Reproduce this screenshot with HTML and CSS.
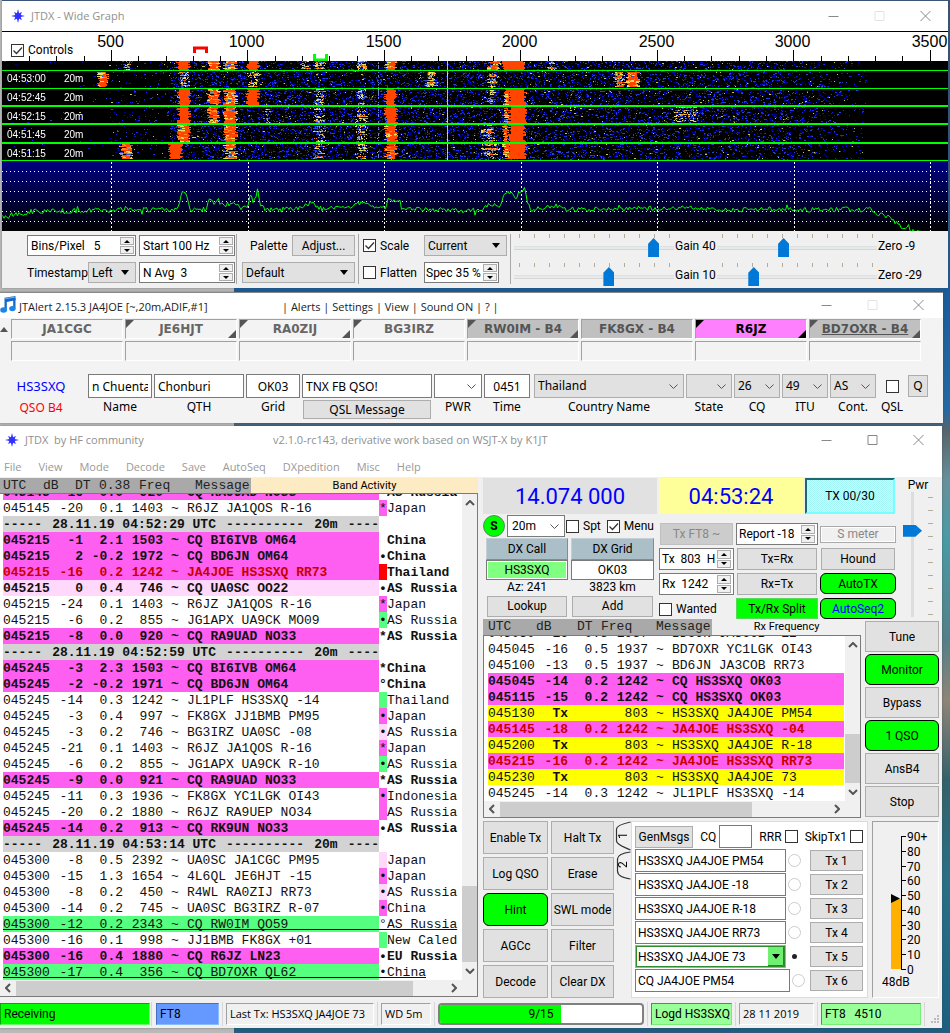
FILE: index.html
```html
<!DOCTYPE html>
<html lang="en">
<head>
<meta charset="utf-8">
<title>JTDX</title>
<link rel="stylesheet" href="styles.css">
</head>
<body>
<svg class="defs" aria-hidden="true">
  <symbol id="star" viewBox="0 0 14 14"><path d="M7 0l1.100 4.300L10.900 3.100 9.700 5.900 14 7l-4.300 1.100 1.200 2.800-2.800-1.200L7 14l-1.100-4.300-2.800 1.200 1.200-2.800L0 7l4.300-1.100-1.200-2.800 2.800 1.200z" fill="#3030ff"/></symbol>
  <symbol id="min" viewBox="0 0 10 10"><path d="M0 5.500h10" stroke="currentColor"/></symbol>
  <symbol id="max" viewBox="0 0 10 10"><path d="M.5.5h9v9h-9z" fill="none" stroke="currentColor"/></symbol>
  <symbol id="close" viewBox="0 0 10 10"><path d="M0 0l10 10M10 0L0 10" stroke="currentColor"/></symbol>
  <symbol id="chev" viewBox="0 0 10 6"><path d="M1 5l4-4 4 4" fill="none" stroke="#555" stroke-width="2"/></symbol>
</svg>

<section class="win graph">
  <header class="title">
    <svg class="logo"><use href="#star"/></svg><span>JTDX - Wide Graph</span>
    <div class="sys"><button aria-label="Minimize"><svg><use href="#min"/></svg></button><button aria-label="Maximize" class="off"><svg><use href="#max"/></svg></button><button aria-label="Close"><svg><use href="#close"/></svg></button></div>
  </header>
  <div class="ruler">
    <svg id="ruler" width="100%" height="30"></svg>
    <label class="check"><input type="checkbox" checked>Controls</label>
  </div>
  <div class="fall">
    <canvas id="fall"></canvas>
    <ul class="stamps">
      <li><b>04:53:00</b>20m</li><li><b>04:52:45</b>20m</li><li><b>04:52:15</b>20m</li><li><b>04:51:45</b>20m</li><li><b>04:51:15</b>20m</li>
    </ul>
  </div>
  <div class="controls">
    <div class="cgroup bins">
      <div class="line">
        <span class="spin w-bins"><input aria-label="Bins per pixel" value="Bins/Pixel   5"><i><button class="u" aria-label="Up"></button><button class="d" aria-label="Down"></button></i></span>
        <span class="spin w-start"><input aria-label="Start" value="Start 100 Hz"><i><button class="u" aria-label="Up"></button><button class="d" aria-label="Down"></button></i></span>
      </div>
      <div class="line">
        <label class="stamp-label">Timestamp<select class="w-left"><option>Left</option></select></label>
        <span class="spin w-start"><input aria-label="N Avg" value="N Avg  3"><i><button class="u" aria-label="Up"></button><button class="d" aria-label="Down"></button></i></span>
      </div>
    </div>
    <div class="cgroup palette">
      <div class="line end"><label for="pal">Palette</label><button class="btn w-adjust">Adjust...</button></div>
      <div class="line"><select id="pal" class="fill"><option>Default</option></select></div>
    </div>
    <div class="cgroup scale">
      <div class="line"><label class="check"><input type="checkbox" checked>Scale</label><select class="w-cur" aria-label="Spectrum"><option>Current</option></select></div>
      <div class="line"><label class="check"><input type="checkbox">Flatten</label><span class="spin w-spec"><input aria-label="Spec" value="Spec 35 %"><i><button class="u" aria-label="Up"></button><button class="d" aria-label="Down"></button></i></span></div>
    </div>
    <div class="cgroup sliders">
      <input id="g1" type="range" value="90"><label for="g1">Gain 40</label><input id="z1" type="range" value="41"><label for="z1">Zero -9</label>
      <input id="g2" type="range" value="60"><label for="g2">Gain 10</label><input id="z2" type="range" value="21"><label for="z2">Zero -29</label>
    </div>
  </div>
</section>

<section class="win alert">
  <header class="title">
    <svg class="note" viewBox="0 0 16 17"><path d="M4.500 1.800L15.500 0v4.300L6.800 6v8H4.500z" fill="#1668c4"/><path d="M13.200 2h2.300v10.500h-2.300z" fill="#1668c4"/><ellipse cx="3.600" cy="14" rx="3.400" ry="2.700" fill="#1c84e8"/><ellipse cx="12.400" cy="12.600" rx="3.200" ry="2.600" fill="#1c84e8"/><path d="M5.200 2.700l9.600-1.500" stroke="#6ab8f8"/></svg>
    <span class="name">JTAlert 2.15.3 JA4JOE [~,20m,ADIF,#1]</span>
    <nav>| <a href="#alerts">Alerts</a> | <a href="#settings">Settings</a> | <a href="#view">View</a> | <a href="#sound">Sound ON</a> | <a href="#help">?</a> |</nav>
    <div class="sys"><button aria-label="Minimize"><svg><use href="#min"/></svg></button><button aria-label="Maximize" class="off"><svg><use href="#max"/></svg></button><button aria-label="Close"><svg><use href="#close"/></svg></button></div>
  </header>
  <div class="calls">
    <span class="uparrow"></span>
    <div>JA1CGC</div><div class="tl br">JE6HJT</div><div class="tl br">RA0ZIJ</div><div class="tl">BG3IRZ</div><div class="tl br b4">RW0IM - B4</div><div class="b4">FK8GX - B4</div><div class="tl br new">R6JZ</div><div class="tl br b4"><u>BD7OXR - B4</u></div>
    <span></span><div></div><div></div><div></div><div></div><div></div><div></div><div></div><div></div>
  </div>
  <div class="qso">
    <div class="who"><b>HS3SXQ</b><em>QSO B4</em></div>
    <label class="f64"><input class="rt" value="n Chuenta">Name</label>
    <label class="f90"><input value="Chonburi">QTH</label>
    <label class="f54"><input class="ct" value="OK03">Grid</label>
    <div class="f130"><input aria-label="QSL message" value="TNX FB QSO!"><button class="btn">QSL Message</button></div>
    <label class="f48"><select class="white"><option></option></select>PWR</label>
    <label class="f46 time"><input class="ct" value="0451">Time</label>
    <label class="f150"><select><option>Thailand</option></select>Country Name</label>
    <label class="f46"><select><option></option></select>State</label>
    <label class="f46"><select><option>26</option></select>CQ</label>
    <label class="f46"><select><option>49</option></select>ITU</label>
    <label class="f46"><select><option>AS</option></select>Cont.</label>
    <label class="qsl"><input type="checkbox">QSL</label>
    <button class="btn q">Q</button>
  </div>
</section>

<section class="win main">
  <header class="title">
    <svg class="logo"><use href="#star"/></svg><span class="name">JTDX &nbsp;by HF community</span><span>v2.1.0-rc143, derivative work based on WSJT-X by K1JT</span>
    <div class="sys"><button aria-label="Minimize"><svg><use href="#min"/></svg></button><button aria-label="Maximize"><svg><use href="#max"/></svg></button><button aria-label="Close"><svg><use href="#close"/></svg></button></div>
  </header>
  <nav class="menu"><a href="#file">File</a><a href="#view">View</a><a href="#mode">Mode</a><a href="#decode">Decode</a><a href="#save">Save</a><a href="#autoseq">AutoSeq</a><a href="#dx">DXpedition</a><a href="#misc">Misc</a><a href="#help">Help</a></nav>
  <div class="work">
    <div class="band">
      <div class="bhead"><div class="cols"><span>UTC</span><span>dB</span><span>DT</span><span>0.38</span><span>Freq</span><span>Message</span></div><h2>Band Activity</h2></div>
      <div class="log">
        <div class="rows"><table id="band"></table></div>
        <div class="vbar"><svg><use href="#chev"/></svg><i></i><b></b><svg class="dn"><use href="#chev"/></svg></div>
        <div class="hbar"><svg class="lf"><use href="#chev"/></svg><b></b><i></i><svg class="rg"><use href="#chev"/></svg></div>
      </div>
    </div>
    <div class="rig">
      <div class="top">
        <div class="knobs">
          <div class="readouts"><div class="freq">14.074 000</div><div class="clock">04:53:24</div><button class="txp">TX 00/30</button></div>
          <div class="tune">
            <div class="dx">
              <div class="bandrow"><button class="sbtn">S</button><select class="white" aria-label="Band"><option>20m</option></select><label class="check"><input type="checkbox">Spt</label><label class="check"><input type="checkbox" checked>Menu</label></div>
              <div class="dxgrid">
                <label for="dxc">DX Call</label><label for="dxg">DX Grid</label>
                <input id="dxc" class="hit" value="HS3SXQ"><input id="dxg" value="OK03">
                <span>Az: 241</span><span>3823 km</span>
                <button class="btn">Lookup</button><button class="btn">Add</button>
              </div>
            </div>
            <div class="ops">
              <button class="btn" disabled>Tx FT8 ~</button>
              <span class="spin"><input aria-label="Report" value="Report -18"><i><button class="u" aria-label="Up"></button><button class="d" aria-label="Down"></button></i></span>
              <div class="smeter">S meter</div>
              <span class="spin"><input aria-label="Tx frequency" value="Tx  803  H"><i><button class="u" aria-label="Up"></button><button class="d" aria-label="Down"></button></i></span>
              <button class="btn">Tx=Rx</button><button class="btn">Hound</button>
              <span class="spin"><input aria-label="Rx frequency" value="Rx  1242"><i><button class="u" aria-label="Up"></button><button class="d" aria-label="Down"></button></i></span>
              <button class="btn">Rx=Tx</button><button class="btn on">AutoTX</button>
              <label class="check"><input type="checkbox">Wanted</label>
              <button class="btn split">Tx/Rx Split</button><button class="btn on blue">AutoSeq2</button>
            </div>
          </div>
        </div>
        <div class="pwr"><label for="pwr">Pwr</label><input id="pwr" type="range" value="71"></div>
      </div>
      <div class="mid">
        <div class="rx">
          <div class="rhead"><div class="cols"><span>UTC</span><span>dB</span><span>DT</span><span>Freq</span><span>Message</span></div><h2>Rx Frequency</h2></div>
          <div class="log">
            <div class="rows"><table id="rx"></table></div>
            <div class="vbar"><svg><use href="#chev"/></svg><i></i><b></b><svg class="dn"><use href="#chev"/></svg></div>
            <div class="hbar"><svg class="lf"><use href="#chev"/></svg><b></b><i></i><svg class="rg"><use href="#chev"/></svg></div>
          </div>
        </div>
        <div class="side"><button class="btn">Tune</button><button class="btn on">Monitor</button><button class="btn">Bypass</button><button class="btn on">1 QSO</button><button class="btn">AnsB4</button><button class="btn">Stop</button></div>
      </div>
      <div class="bottom">
        <div class="pad"><button class="btn">Enable Tx</button><button class="btn">Halt Tx</button><button class="btn">Log QSO</button><button class="btn">Erase</button><button class="btn on">Hint</button><button class="btn">SWL mode</button><button class="btn">AGCc</button><button class="btn">Filter</button><button class="btn">Decode</button><button class="btn">Clear DX</button></div>
        <div class="tabs">
          <svg viewBox="0 0 15 60"><path d="M15 1C6 3 1 5 1 8v12c0 4 8 6 14 9M15 31C7 32 2 34 2 38v12c0 5 6 7 13 8" fill="none" stroke="#333" stroke-width="1.200"/></svg>
          <button>1</button><button>2</button>
        </div>
        <div class="msgs">
          <div class="gen"><button class="btn">GenMsgs</button><label>CQ<input></label><label class="check">RRR<input type="checkbox"></label><label class="check">SkipTx1<input type="checkbox"></label></div>
          <div class="m"><input aria-label="Message 1" value="HS3SXQ JA4JOE PM54"><input type="radio" name="m" aria-label="Tx 1 next"><button class="btn">Tx 1</button></div>
          <div class="m"><input aria-label="Message 2" value="HS3SXQ JA4JOE -18"><input type="radio" name="m" aria-label="Tx 2 next"><button class="btn">Tx 2</button></div>
          <div class="m"><input aria-label="Message 3" value="HS3SXQ JA4JOE R-18"><input type="radio" name="m" aria-label="Tx 3 next"><button class="btn">Tx 3</button></div>
          <div class="m"><input aria-label="Message 4" value="HS3SXQ JA4JOE RR73"><input type="radio" name="m" aria-label="Tx 4 next"><button class="btn">Tx 4</button></div>
          <div class="m"><select aria-label="Message 5"><option>HS3SXQ JA4JOE 73</option></select><input type="radio" name="m" aria-label="Tx 5 next" checked><button class="btn">Tx 5</button></div>
          <div class="m last"><input aria-label="Message 6" value="CQ JA4JOE PM54"><input type="radio" name="m" aria-label="Tx 6 next"><button class="btn">Tx 6</button></div>
        </div>
        <div class="meter">
          <svg width="60" height="174"><path d="M18 77h10v70H18z" fill="#ffb000"/><path d="M18 72l9 4.500-9 4.500z"/><path id="axis" fill="none" stroke="#000"/><g id="marks"></g><text x="9" y="164">48dB</text></svg>
        </div>
      </div>
    </div>
  </div>
  <footer class="status">
    <div class="s-rx">Receiving</div><hr><div class="s-mode">FT8</div><hr><div class="s-last">Last Tx: HS3SXQ JA4JOE 73</div><hr><div class="s-wd">WD 5m</div><hr>
    <div class="s-prog"><i style="width:60%"></i><span>9/15</span></div><hr><div class="s-logd">Logd HS3SXQ</div><hr><div class="s-date">28 11 2019</div><hr><div class="s-cnt">FT8 &nbsp; 4510</div><hr>
    <svg class="grip" viewBox="0 0 9 9"><path d="M6 0h2v2H6zM3 3h2v2H3zM6 3h2v2H6zM0 6h2v2H0zM3 6h2v2H3zM6 6h2v2H6z" fill="#bbb"/></svg>
  </footer>
</section>
<script src="app.js"></script>
</body>
</html>
```
FILE: styles.css
```css
*{box-sizing:border-box}
body{
  margin:0;font:12px/14px Roboto,"Liberation Sans",sans-serif;color:#000;
  background:
    linear-gradient(90deg,#b9b9b9 234px,transparent 234px),
    linear-gradient(#3a5578 0,#1a5c9a 290px,#2469a3 410px,#56646c 430px,#68909a 480px,#4a9aa5 540px,#557f88 640px,#8f8578 700px,#35616a 780px,#2a6f86 880px,#1c5f80 1033px);
}
button,input,select{font:inherit;color:inherit;margin:0;border-radius:0;outline:0}
input[type=checkbox]{appearance:none;width:13px;height:13px;flex:none;background:#fff center/11px no-repeat;border:1px solid #333}
input[type=checkbox]:checked{background-image:url("data:image/svg+xml,%3Csvg xmlns='http://www.w3.org/2000/svg' viewBox='0 0 11 11'%3E%3Cpath d='M1.500 5.500l3 3 5.500-6' fill='none' stroke='%23333' stroke-width='1.300'/%3E%3C/svg%3E")}
a{color:inherit;text-decoration:none}
.defs{position:absolute;width:0;height:0}
.win{background:#f0f0f0;box-shadow:0 0 2px #4448}
.title{display:flex;align-items:center;background:#fff;color:#909090;font:11px/16px "Open Sans","Noto Sans",sans-serif}
.logo{width:14px;height:14px;flex:none}
.sys{margin-left:auto;display:flex;align-items:center;gap:35px;color:#888}
.sys button{border:0;background:none;padding:0;width:11px;height:10px;display:flex}
.sys svg{width:11px;height:10px}
.sys .off{color:#e4e4e4}
.btn{background:#e1e1e1;border:1px solid #adadad;padding:0;text-align:center;white-space:nowrap}
.btn:disabled{background:#ccc;color:#888;border-color:#bfbfbf}
.btn.on{background:#0f0;border:1px solid #000;border-radius:6px}
.btn.blue{color:#00f}
.check{display:flex;align-items:center;gap:4px;white-space:nowrap}
.spin{display:flex;height:21px;background:#fff;border:1px solid #7a7a7a;padding:1px}
.spin input{flex:1;min-width:0;border:0;padding:0 0 0 2px;background:none;white-space:pre}
.spin i{display:flex;flex-direction:column;gap:1px;width:14px;flex:none}
.spin button{flex:1;border:1px solid #adadad;background:#f0f0f0;padding:0;display:flex;align-items:center;justify-content:center}
.spin button::before{content:"";border:3px solid transparent}
.spin .u::before{border-top:0;border-bottom:3px solid #000}
.spin .d::before{border-bottom:0;border-top:3px solid #000}
select{appearance:none;height:21px;border:1px solid #adadad;padding:0 0 0 3px;background:#e1e1e1 right 5px center/9px 5px no-repeat url("data:image/svg+xml,%3Csvg xmlns='http://www.w3.org/2000/svg' viewBox='0 0 9 5'%3E%3Cpath d='M0 0h8L4 5z'/%3E%3C/svg%3E")}

/* wide graph */
.graph{margin:0 2px 4px;border-top:1px solid #3a5578}
.graph .title{height:30px;padding:0 17px 0 9px;gap:6px}
.ruler{display:grid;background:#fff;border-top:1px solid #000;height:30px;overflow:hidden}
.ruler>*{grid-area:1/1}
.ruler text{font:16px "Liberation Sans",sans-serif;text-anchor:middle}
.ruler .check{align-self:end;justify-self:start;padding:0 0 5px 9px}
.fall{display:grid;background:#000}
.fall>*{grid-area:1/1;min-width:0}
.fall canvas{display:block;width:100%;height:170px}
.stamps{list-style:none;margin:9px 0 0;padding:0 0 0 5px;height:93px;display:flex;flex-direction:column;justify-content:space-between;color:#fff;font:10px/18px "Liberation Sans",sans-serif;z-index:1}
.stamps b{display:inline-block;width:57px;font-weight:400}
.controls{display:flex;height:57px;padding:3px 0 4px}
.cgroup{display:flex;flex-direction:column;justify-content:space-between;border-left:1px solid #a8a8a8;padding:1px 3px}
.cgroup.bins{border:0;padding-left:25px;padding-right:1px}
.line{display:flex;gap:3px;align-items:center}
.line.end{justify-content:space-between;padding-left:8px}
.w-bins{width:109px}.w-start{width:96px}.w-left{width:53px}.w-adjust{width:63px;height:21px}
.w-cur{width:83px}.w-spec{width:75px}
.w-spec input{padding:0}
.stamp-label{display:flex;width:109px;align-items:center;justify-content:space-between}
.palette{width:122px;padding-left:5px}
.fill{width:100%}
.scale{width:152px;padding-left:4px}
.scale .check{width:58px}
.sliders{flex:1;display:grid;grid-template-columns:160px 41px 160px 1fr;gap:6px 1px;align-items:center;padding:0 0 0 3px}
.sliders label{white-space:nowrap}
.sliders input{appearance:none;width:160px;height:23px;background:repeating-linear-gradient(90deg,#b4ad98 0 1px,transparent 1px 15px) 5px 0/151px 4px no-repeat}
.sliders input::-webkit-slider-runnable-track{height:23px;background:linear-gradient(#d6d6d6,#e7eaea 1px 3px,#d6d6d6 3px) 0 12px/100% 4px no-repeat}
.sliders input::-webkit-slider-thumb{appearance:none;width:11px;height:19px;margin-top:4px;background:#0078d7;clip-path:polygon(50% 0,100% 30%,100% 100%,0 100%,0 30%)}

/* alert window */
.alert{margin:0 7px 3px 0;border-top:1px solid #888;background:#f3f3f3}
.alert .title{height:25px;padding:3px 19px 0 0;color:#222}
.alert .title span,.alert .title nav,.alert .title a{white-space:nowrap}
.alert nav{word-spacing:normal}
.note{width:16px;height:17px;margin-right:3px;align-self:flex-start;flex:none}
.alert .sys{margin-bottom:4px}
.alert .name{width:263px}
.calls{display:grid;grid-template-columns:9px repeat(8,112px);gap:2px;padding:1px 0 0;color:#666;font:bold 12px/18px "DejaVu Sans",sans-serif;text-align:center}
.calls div{position:relative;height:20px;border:1px solid #fff;border-top-color:#a0a0a0;border-left-color:#a0a0a0;font-size:12px}
.calls .b4{background:#c0c0c0;color:#555}
.calls .new{background:#ff80ff;color:#000}
.tl::before,.br::after{content:"";position:absolute;border:4px solid transparent}
.tl::before{left:0;top:0;border-left-color:#555;border-top-color:#555}
.br::after{right:0;bottom:0;border-right-color:#555;border-bottom-color:#555}
.new::before,.new::after{filter:brightness(0)}
.uparrow{align-self:center;border:4px solid transparent;border-top:0;border-bottom:5px solid #555;width:8px}
.qso{display:flex;align-items:flex-start;gap:2px;padding:13px 0 4px;font:12px/16px "Noto Sans",sans-serif}
.who{width:86px;display:flex;flex-direction:column;align-items:center;padding:4px 4px 0 0;gap:6px}
.who b{font-weight:400;font-size:13px;color:#00f}
.who em{font-style:normal;color:#f00}
.qso label,.qso .f130{display:flex;flex-direction:column;align-items:center;gap:2px;white-space:nowrap}
.qso label{gap:1px}
.qso input:not([type]),.qso select{width:100%;height:24px}
.qso input:not([type]){border:1px solid #7a7a7a;padding:0 3px;background:#fff}
.qso .rt{padding:0 1px}
.qso select,.white{background-image:url("data:image/svg+xml,%3Csvg xmlns='http://www.w3.org/2000/svg' viewBox='0 0 9 5'%3E%3Cpath d='M.5.5l4 4 4-4' fill='none' stroke='%23555'/%3E%3C/svg%3E")}
select.white{background-color:#fff;border-color:#7a7a7a}
.f64{width:64px}.f90{width:90px}.f54{width:54px}.f130{width:130px}.f48{width:48px}.f46{width:46px}.f150{width:150px}
.time{margin-right:2px}
.rt{text-align:right}.ct{text-align:center}
.f130 .btn{width:128px;height:19px}
.qso .qsl{width:28px;padding-top:6px;gap:6px}
.qso .q{width:20px;height:22px;margin-top:1px}

/* main window */
.main{margin:0 8px 4px 0}
.main .title{height:28px;padding:0 18px 0 5px}
.main .name{margin-left:6px;width:248px}
.menu{background:#fff;color:#999;display:flex;gap:17px;padding:6px 4px 3px;height:23px;margin-bottom:1px;font:11px/14px "Open Sans","Noto Sans",sans-serif}
.work{display:flex}
.band{flex:1;min-width:0}
.bhead,.rhead{display:flex;align-items:center}
.cols{display:flex;background:#a9a9a9;color:#222;font:13px/15px "Liberation Mono",monospace}
.bhead .cols{width:251px;padding-left:3px}
.bhead{background:#fdebc4}
.bhead span:nth-child(1){width:40px}.bhead span:nth-child(2){width:32px}.bhead span:nth-child(3){width:24px}.bhead span:nth-child(4){width:40px}.bhead span:nth-child(5){width:56px}
h2{margin:0;flex:1;text-align:center;font-size:11px;line-height:14px;font-weight:400}
.log{display:grid;grid-template-columns:1fr 15px;border:1px solid #7a7a7a;background:#fff;font:13px/15px "Liberation Mono",monospace}
.band .log{border-left:0}
.rows{display:flex;align-items:flex-end;overflow:hidden;padding-left:3px;height:486px}
table{border-collapse:collapse;table-layout:fixed;width:100%;color:#111}
td{padding:1px 0 0;height:16px;text-align:right;white-space:pre;overflow:hidden}
td:first-child,.msg,.msg~td{text-align:left}
.utc{width:48px}.db{width:32px}.dt,.fr{width:40px}.tl0{width:24px}.mw{width:192px}.fl{width:8px}
.tilde{text-align:center}
.pk td.r,.pk.fm{background:#ff5ff0}.pk td,.pale td{font-weight:700}
.pale td.r{background:#ffd8fb}
.gr td.r{background-color:#55ff80}
.gr td:not(:last-child){background-image:linear-gradient(#000,#000);background-position:0 13px;background-size:100% 1px;background-repeat:no-repeat}
.gr td:last-child{text-decoration:underline}
.red td.r{color:#c80000}
.tx td{background:#ff0}.tx .dbv{font-weight:700}
.sep td{background:#d3d3d3}.sep td~td{background:none}
.sep div{display:flex;justify-content:space-between;font-weight:700}
.fm{background:#ff5ff0}.fg{background:#55ff80}.fp{background:#ffd8fb}.fr0{background:#f00}
.vbar,.hbar{display:flex;background:#f0f0f0;align-items:center}
.vbar{flex-direction:column}
.hbar{height:16px;grid-column:1/3}
.vbar svg,.hbar svg{width:10px;height:6px;flex:none;margin:6px 3px}
.vbar b{width:15px;background:#cdcdcd;flex:76}.vbar i{flex:375}
.hbar b{height:15px;background:#cdcdcd;flex:396}.hbar i{flex:33}
.dn{transform:rotate(180deg)}.lf{transform:rotate(-90deg)}.rg{transform:rotate(90deg)}
.hbar .rg{margin-right:18px}

.rig{width:464px;flex:none;padding:0 3px 0 5px}
.top{display:flex}
.knobs{width:412px}
.readouts{display:flex;gap:2px;height:36px;font-size:22px;line-height:38px;color:#00f;text-align:center}
.freq{width:174px;background:#e1e1e1}
.clock{width:144px;background:#ffff99}
.txp{width:90px;height:36px;font-size:12px;line-height:14px;color:#000;padding:0;border:2px solid;border-color:#1f6a70 #7ff #7ff #1f6a70;background:repeating-conic-gradient(#a4f6f6 0 25%,#c4ffff 0 50%) 0 0/2px 2px}
.tune{display:flex;gap:5px}
.dx{width:171px}
.bandrow{display:flex;align-items:center;height:22px;margin:1px 0}
.bandrow select{width:58px;height:22px;margin:0 1px 0 2px;padding-left:4px}
.bandrow .check+.check{margin-left:6px}
.sbtn{width:22px;height:22px;border:1px solid #5a8a5a;border-radius:11px;background:#0f0;font-weight:700;padding:0}
.dxgrid{display:grid;grid-template-columns:82px 83px;gap:0 3px;padding-left:3px;text-align:center;line-height:15px}
.dxgrid label{background:#abbfc9;border:1px solid;border-color:#c4d0d6 #7e8e96 #7e8e96 #c4d0d6;height:22px;line-height:20px}
.dxgrid input{width:100%;height:20px;text-align:center;border:1px solid #7a7a7a;background:#fff;padding:0}
.dxgrid .hit{background:#80ff80;box-shadow:inset 0 0 0 1px #fff}
.dxgrid .btn{height:21px;margin:1px}
.ops{display:grid;grid-template-columns:75px 82px 76px;grid-auto-rows:22px;gap:3px 2px;padding-top:9px;margin-bottom:-1px}
.ops .spin{padding:1px 2px;height:22px}
.ops .spin input{padding:0}
.ops .btn{margin:0 1px}
.ops .on,.ops .split{margin:0}
.ops .split{background:#0f0;border-color:#5ad85a}
.ops .on,.ops .split{height:21px}
.smeter{align-self:center;height:17px;border:1px solid #aaa;box-shadow:inset 0 0 0 1px #fff;text-align:center;color:#888;line-height:15px}
.pwr{flex:1;display:flex;flex-direction:column;align-items:center;line-height:14px;padding-left:2px}
.pwr input{appearance:none;writing-mode:vertical-lr;direction:rtl;width:30px;height:125px;background:linear-gradient(#ddd,#ddd) 8px 0/3px 100% no-repeat,repeating-linear-gradient(#b4ad98 0 1px,transparent 1px 13px) 25px 5px/5px 118px no-repeat}
.pwr input::-webkit-slider-thumb{appearance:none;width:19px;height:12px;background:#0078d7;clip-path:polygon(0 0,65% 0,100% 50%,65% 100%,0 100%)}
.pwr input::-webkit-slider-runnable-track{width:30px}
.mid{display:flex}
.rx{width:379px}
.rhead .cols{width:229px;padding-left:5px;line-height:16px}
.rhead span:nth-child(1){width:48px}.rhead span:nth-child(2){width:41px}.rhead span:nth-child(3){width:24px}.rhead span:nth-child(4){width:55px}
.rx .rows{padding:0 1px 0 4px;height:165px}
.rx .mw{width:auto}
.rx .vbar i{flex:80}.rx .vbar b{flex:49}
.rx .hbar b{flex:252}.rx .hbar i{flex:77}
.side{width:74px;margin:2px 0 0 4px;display:flex;flex-direction:column;gap:2px}
.side .btn{height:31px}
.bottom{display:flex;margin-top:3px;height:177px}
.pad{display:grid;grid-template-columns:65px 63px;grid-auto-rows:33px;gap:3px;flex:none}
.tabs{position:relative;width:16px;margin-left:1px;display:flex;flex-direction:column;flex:none}
.tabs svg{position:absolute;width:16px;height:60px}
.tabs button{border:0;background:none;padding:0;width:16px;height:29px;writing-mode:vertical-rl;transform:rotate(180deg);position:relative}
.msgs{width:237px;flex:none;background:#fff;border:1px solid #dcdcdc;padding:3px 4px 3px 3px;display:flex;flex-direction:column;gap:1px}
.gen{display:flex;align-items:center;justify-content:space-between;height:23px}
.gen .btn{width:58px;height:22px}
.gen label{display:flex;align-items:center;gap:3px}
.gen label input:not([type]){width:33px;height:23px;border:1px solid #7a7a7a}
.m{display:flex;align-items:center;height:23px;gap:2px}
.m input:not([type]){width:151px;height:23px;border:1px solid #7a7a7a;padding:0 2px}
.m.last input:not([type]){width:155px}
.m select{width:151px;height:23px;background-color:#fff;border:2px solid #54e854;outline:1px solid #2e8b2e;outline-offset:-2px;padding-left:1px;background-image:url("data:image/svg+xml,%3Csvg xmlns='http://www.w3.org/2000/svg' viewBox='0 0 16 19'%3E%3Cpath d='M0 0h16v19H0z' fill='%2370f070'/%3E%3Cpath d='M15.500 0v18.500H0' fill='none' stroke='%23282'/%3E%3Cpath d='M4 7h8l-4 5z'/%3E%3C/svg%3E");background-size:16px 19px;background-position:right 0 center}
.m input[type=radio]{appearance:none;width:13px;height:13px;border:1px solid #ccc;border-radius:7px;background:#fff}
.m input[type=radio]:checked{border:4px solid #fff;background:#222}
.m .btn{width:53px;height:21px;margin-left:auto}
.meter{flex:1;margin-left:4px;border:1px solid;border-color:#a0a0a0 #fff #fff #a0a0a0}
.meter svg{display:block}

.status{display:flex;align-items:center;gap:3px;height:30px;padding:2px 2px 0 0;white-space:nowrap}
.status hr{width:1px;height:24px;margin:0;border:0;background:#d7d7d7}
.status>div{height:22px;line-height:20px;padding:0 3px;border:1px solid;border-color:#a0a0a0 #fff #fff #a0a0a0}
.status .s-rx{width:150px;margin-right:-2px;background:#0f0;border-color:#0a0 #6f6 #6f6 #0a0}
.status .s-mode{width:63px;margin-left:1px;background:#69f;border-color:#4570c0 #8bf #8bf #4570c0}
.status .s-last,.status .s-wd,.status .s-date{font-family:"Open Sans","Noto Sans",sans-serif;font-size:11px}
.s-last{width:148px}.s-wd{width:50px}
.status .s-prog{flex:1;position:relative;border:2px solid #808080;border-radius:4px;background:#fff;padding:0;text-align:center;line-height:18px;overflow:hidden}
.s-prog i{position:absolute;left:0;top:0;bottom:0;background:#0f0}
.s-prog span{position:relative}
.status .s-logd,.status .s-cnt{background:#9f9;border-color:#3f9f3f #7e7 #7e7 #3f9f3f}
.s-logd{width:81px}.s-date{width:75px}.s-cnt{width:100px}
.grip{width:9px;height:9px;align-self:flex-end;margin:0 0 4px 3px}
```
FILE: app.js
```js
(function () {
  var c = document.getElementById('fall'), w = c.clientWidth, h = 170;

  // frequency ruler, 100 Hz ticks
  var s = '', x, y, k;
  for (k = -3; 109 + k * 27.29 < w; k++) {
    x = Math.round(109 + k * 27.29) + 0.5;
    s += '<path d="M' + x + ' 30v' + (k % 5 ? -6 : -12) + '" stroke="#000"/>';
    if (k % 5 === 0 && x < w - 15) s += '<text x="' + (x - 1) + '" y="15">' + (500 + k * 100) + '</text>';
  }
  s += '<path d="M192.500 21v-5h12v5" fill="none" stroke="#f00" stroke-width="3"/>';
  s += '<path d="M312.500 22v6h12v-6" fill="none" stroke="#0f0" stroke-width="3"/>';
  document.getElementById('ruler').innerHTML = s;

  // waterfall and spectrum
  c.width = w; c.height = h;
  var g = c.getContext('2d'), seed = 7;
  function rnd() { seed = (seed * 16807) % 2147483647; return seed / 2147483647; }
  function dot(x, y, col, n) { g.fillStyle = col; g.fillRect(x - 2, y, n || 1, 1); }
  g.fillStyle = '#000'; g.fillRect(0, 0, w, h);
  var blues = ['#0000b0', '#0a14c8', '#1428ff', '#000088', '#2848c8'];
  for (y = 0; y < 99; y++) for (x = 4; x < 866; x++) {
    var d = x < 110 ? 0.006 : x < 170 ? 0.04 : x < 560 ? 0.18 : 0.16;
    if (x > 780) d *= (890 - x) / 110;
    if (rnd() < d) dot(x, y, rnd() < 0.04 ? '#c8c850' : blues[rnd() * 5 | 0], rnd() < 0.3 ? 2 : 1);
  }
  for (y = 0; y < 99; y++) { dot(447, y, rnd() < 0.4 ? '#e8e060' : '#b0b8d8'); if (rnd() < 0.5) dot(378, y, '#7088d0'); }
  // each strip: top, bottom, then [x0, x1, strength]
  var strips = [
    [0, 9, [122, 132, .15], [176, 191, 1], [207, 221, .7], [223, 238, .65], [246, 260, .9], [300, 312, .2], [313, 327, .25], [355, 368, .2], [384, 398, .85], [487, 501, .6], [502, 526, 1], [545, 557, .2]],
    [11, 26, [97, 109, .65], [178, 190, .25], [247, 260, .2], [425, 438, .35], [487, 499, .22], [614, 625, .5], [625, 640, .7]],
    [28, 44, [177, 191, 1], [207, 221, .55], [223, 238, .6], [246, 260, .95], [313, 326, .22], [355, 368, .15], [384, 397, .95], [487, 497, .15], [503, 512, .65], [508, 527, 1]],
    [46, 62, [177, 191, .95], [207, 220, .65], [223, 238, .7], [262, 273, .08], [313, 326, .14], [355, 368, .1], [384, 398, .95], [502, 510, .55], [508, 527, 1], [673, 698, .12]],
    [64, 81, [177, 191, .7], [223, 238, .8], [313, 326, .15], [355, 368, .15], [384, 398, .85], [481, 495, .16], [502, 510, .7], [508, 526, .9]],
    [83, 98, [119, 133, .55], [168, 183, .95], [223, 238, .55], [313, 326, .18], [355, 368, .2], [384, 398, .7], [481, 500, .18], [502, 512, .65], [508, 527, .97]]
  ];
  strips.forEach(function (st) {
    st.slice(2).forEach(function (b) {
      var v = b[2], wd = b[1] - b[0];
      for (var y = st[0]; y < st[1]; y++) {
        var row = rnd() * 0.6 - 0.3, x0 = b[0] + (rnd() * 4 | 0), x1 = b[1] - (rnd() * 4 | 0);
        for (var x = x0; x < x1;) {
          var edge = 1 - Math.abs((x - b[0]) / wd - 0.5) * 0.9;
          var n = 1 + (rnd() * (v > 0.5 ? 4 : 1.4) | 0);
          if (x + n > x1) n = x1 - x;
          var q = v * edge + row * (v < 0.9 ? 0.7 : 0.3) + (rnd() - 0.5) * 0.5;
          if (v >= 0.9) q += 0.2;
          if (q > 0.52) dot(x, y, '#ff4500', n);
          else if (q > 0.4) dot(x, y, '#ff8a20', n);
          else if (q > 0.28) dot(x, y, '#e8e060', n);
          else if (q > 0.15) dot(x, y, rnd() < 0.6 ? '#2848d0' : '#8890a0', n);
          x += n;
        }
      }
    });
  });
  g.fillStyle = '#0f0';
  [[9, 1], [27, 1], [44, 2], [62, 2], [81, 2], [99, 1]].forEach(function (l) { g.fillRect(0, l[0], w, l[1]); });
  var gr = g.createLinearGradient(0, 100, 0, h);
  gr.addColorStop(0, '#000082'); gr.addColorStop(1, '#000');
  g.fillStyle = gr; g.fillRect(0, 100, w, 70);
  g.fillStyle = '#fff';
  for (y = 110; y < 165; y += 10) for (x = 0; x < w; x += 4) g.fillRect(x, y, 1, 1);
  for (k = 0; k < 12; k++) for (y = 101; y < h; y += 4) g.fillRect(Math.round(109 + k * 136.5), y, 1, 2);
  var pts = [[2, 216], [8, 218], [20, 213], [32, 211], [110, 210], [120, 208], [140, 209], [176, 209], [183, 189], [187, 197], [190, 210], [205, 209], [208, 200], [211, 197], [214, 204], [217, 199], [222, 206], [233, 201], [240, 208], [246, 207], [250, 195], [253, 203], [257, 190], [260, 204], [266, 209], [298, 208], [310, 202], [320, 208], [350, 208], [360, 202], [376, 208], [384, 207], [388, 199], [397, 201], [402, 209], [478, 210], [490, 203], [501, 205], [504, 193], [513, 192], [516, 199], [519, 191], [524, 188], [527, 203], [531, 209], [555, 205], [565, 209], [680, 207], [720, 209], [871, 209], [890, 218], [902, 226], [914, 232], [960, 234]];
  g.strokeStyle = '#0f0'; g.lineWidth = 1; g.beginPath();
  for (var i = 0, px = 2; px < 950; px += 1.5) {
    while (i < pts.length - 2 && px > pts[i + 1][0]) i++;
    var a = pts[i], b = pts[i + 1], yy = a[1] + (b[1] - a[1]) * (px - a[0]) / (b[0] - a[0]);
    yy += (rnd() - 0.5) * (rnd() < 0.05 ? 11 : 5);
    g.lineTo(px - 1.5, yy - 61 + 0.5);
  }
  g.stroke();

  // dB meter scale
  var d2 = 'M28.500 14v133', t = '';
  for (i = 0; i < 10; i++) {
    var my = 14.5 + Math.round(i * 14.75);
    d2 += 'M28 ' + my + 'h5';
    t += '<text x="34" y="' + (my + 4) + '">' + (90 - i * 10) + (i ? '' : '+') + '</text>';
  }
  document.getElementById('axis').setAttribute('d', d2);
  document.getElementById('marks').innerHTML = t;

  // decodes: row style|utc|dB|DT|freq|message|flag style|flag|country
  var band = [
    'pk|045145|-16|0.0|920|CQ RA9UAD NO33|||AS Russia', '|045145|-20|0.1|1403|R6JZ JA1QOS R-16|fm|*|Japan',
    'sep|04:52:29', 'pk|045215|-1|2.1|1503|CQ BI6IVB OM64|||China', 'pk|045215|2|-0.2|1972|CQ BD6JN OM64||•|China',
    'pk red|045215|-16|0.2|1242|JA4JOE HS3SXQ RR73|fr0||Thailand', 'pale|045215|0|0.4|746|CQ UA0SC OO22||•|AS Russia',
    '|045215|-24|0.1|1403|R6JZ JA1QOS R-16|fm|*|Japan', '|045215|-6|0.2|855|JG1APX UA9CK MO09|fg|•|AS Russia',
    'pk|045215|-8|0.0|920|CQ RA9UAD NO33||*|AS Russia', 'sep|04:52:59', 'pk|045245|-3|2.3|1503|CQ BI6IVB OM64||*|China',
    'pk|045245|-2|-0.2|1971|CQ BD6JN OM64||°|China', '|045245|-14|0.3|1242|JL1PLF HS3SXQ -14|fg||Thailand',
    '|045245|-3|0.4|997|FK8GX JJ1BMB PM95|fm|•|Japan', '|045245|-3|0.2|746|BG3IRZ UA0SC -08|fp|•|AS Russia',
    '|045245|-21|0.1|1403|R6JZ JA1QOS R-16|fm|*|Japan', '|045245|-6|0.2|855|JG1APX UA9CK R-10|fg|•|AS Russia',
    'pk|045245|-9|0.0|921|CQ RA9UAD NO33||*|AS Russia', '|045245|-11|0.3|1936|FK8GX YC1LGK OI43|fm|•|Indonesia',
    '|045245|-20|0.2|1880|R6JZ RA9UEP NO34|fm||AS Russia', 'pk|045245|-14|0.2|913|CQ RK9UN NO33||•|AS Russia',
    'sep|04:53:14', '|045300|-8|0.5|2392|UA0SC JA1CGC PM95|fp||Japan', '|045300|-15|1.3|1654|4L6QL JE6HJT -15|fm|•|Japan',
    '|045300|-8|0.2|450|R4WL RA0ZIJ RR73|fp|•|AS Russia', '|045300|-14|0.2|745|UA0SC BG3IRZ R-07|fm|•|China',
    'gr|045300|-12|0.2|2343|CQ RW0IM QO59||°|AS Russia', '|045300|-16|0.1|998|JJ1BMB FK8GX +01|fg||New Caled',
    'pk|045300|-16|0.4|1880|CQ R6JZ LN23||•|EU Russia', 'gr|045300|-17|0.4|356|CQ BD7OXR QL62||•|China'
  ];
  var rx = [
    '|045030|-16|0.5|1937|BD6JN JA3COB -12', '|045045|-16|0.5|1937|BD7OXR YC1LGK OI43', '|045100|-13|0.5|1937|BD6JN JA3COB RR73',
    'pk|045045|-14|0.2|1242|CQ HS3SXQ OK03', 'pk|045115|-15|0.2|1242|CQ HS3SXQ OK03', 'tx|045130|Tx||803|HS3SXQ JA4JOE PM54',
    'pk red|045145|-18|0.2|1242|JA4JOE HS3SXQ -04', 'tx|045200|Tx||803|HS3SXQ JA4JOE R-18', 'pk red|045215|-16|0.2|1242|JA4JOE HS3SXQ RR73',
    'tx|045230|Tx||803|HS3SXQ JA4JOE 73', '|045245|-14|0.3|1242|JL1PLF HS3SXQ -14'
  ];
  function fill(id, rows, wide) {
    var out = '<colgroup><col class="utc"><col class="db"><col class="dt"><col class="fr"><col class="tl0"><col class="mw">' + (wide ? '<col class="fl"><col>' : '') + '</colgroup>';
    rows.forEach(function (line) {
      var f = line.split('|');
      if (f[0] === 'sep') {
        out += '<tr class="sep"><td colspan="6"><div><span>-----</span><span>28.11.19 ' + f[1] + ' UTC</span><span>----------</span><span>20m</span><span>----</span></div></td><td></td><td></td></tr>';
        return;
      }
      out += '<tr class="' + f[0] + '"><td class="r">' + f[1] + '</td><td class="r dbv">' + f[2] + '</td><td class="r">' + f[3] + '</td><td class="r">' + f[4] + '</td><td class="r tilde">~</td><td class="r msg">' + f[5] + '</td>';
      if (wide) out += '<td class="' + f[6] + '">' + f[7] + '</td><td>' + f[8] + '</td>';
      out += '</tr>';
    });
    document.getElementById(id).innerHTML = out;
  }
  fill('band', band, true);
  fill('rx', rx, false);
})();
```
